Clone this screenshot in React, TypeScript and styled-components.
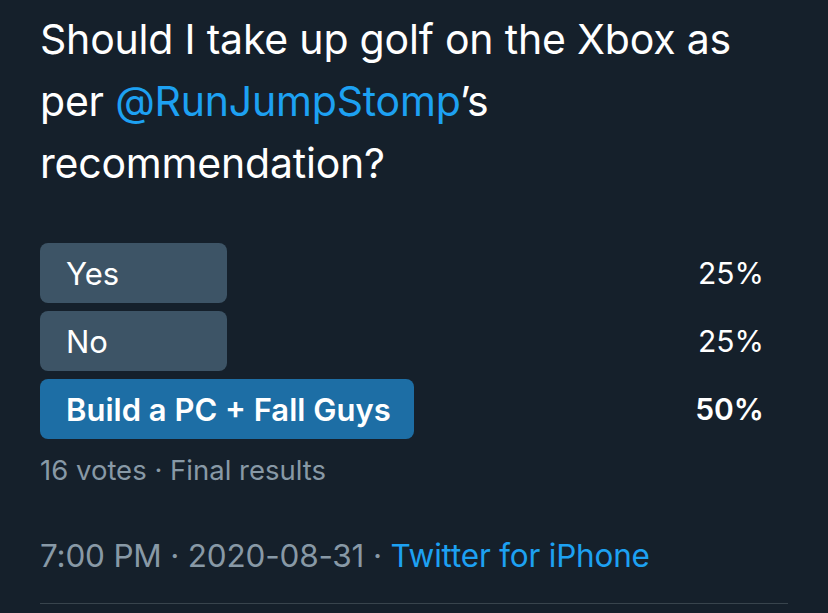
import React from "react";
import styled, { createGlobalStyle } from "styled-components";

const Global = createGlobalStyle`
  html, body {
    margin: 0;
    padding: 0;
    background: #15202b;
  }
  * { box-sizing: border-box; }
`;

const Page = styled.div`
  width: 828px;
  height: 613px;
  overflow: hidden;
  background: #15202b;
  padding: 8px 40px 0 40px;
  font-family: Inter, "Noto Sans", sans-serif;
  color: #ffffff;
  display: flex;
  flex-direction: column;
`;

const Question = styled.p`
  margin: 0;
  font-size: 41px;
  line-height: 62px;
  font-weight: 400;
  letter-spacing: -0.2px;
  color: #ffffff;
`;

const Mention = styled.span`
  color: #1da1f2;
`;

const Poll = styled.div`
  margin-top: 49px;
  display: flex;
  flex-direction: column;
  gap: 8px;
`;

const Row = styled.div`
  display: flex;
  align-items: center;
  height: 60px;
`;

const Bar = styled.div<{ $winner?: boolean }>`
  height: 60px;
  border-radius: 8px;
  background: ${(p) => (p.$winner ? "#1d6ea5" : "#3d5466")};
  display: flex;
  align-items: center;
  padding-left: 26px;
  white-space: nowrap;
  flex: none;
`;

const Label = styled.span<{ $winner?: boolean }>`
  font-size: 31px;
  font-weight: ${(p) => (p.$winner ? 600 : 400)};
  color: #ffffff;
`;

const Percent = styled.span<{ $winner?: boolean }>`
  margin-left: auto;
  padding-right: 24px;
  font-size: 30px;
  font-weight: ${(p) => (p.$winner ? 600 : 400)};
  color: #ffffff;
`;

const Stats = styled.div`
  margin-top: 15px;
  font-size: 27.5px;
  line-height: 32px;
  color: #8899a6;
`;

const Footer = styled.div`
  margin-top: 50px;
  font-size: 31.5px;
  line-height: 40px;
  color: #8899a6;
  letter-spacing: -0.2px;
`;

const Source = styled.span`
  color: #1da1f2;
`;

const Divider = styled.hr`
  margin: 27px 0 0 0;
  border: none;
  height: 1px;
  background: #38444d;
`;

const options = [
  { label: "Yes", pct: 25 },
  { label: "No", pct: 25 },
  { label: "Build a PC + Fall Guys", pct: 50, winner: true },
];

export default function App() {
  return (
    <>
      <Global />
      <Page>
        <Question>
          Should I take up golf on the Xbox as
          <br />
          per <Mention>@RunJumpStomp</Mention>’s
          <br />
          recommendation?
        </Question>
        <Poll>
          {options.map((o) => (
            <Row key={o.label}>
              <Bar $winner={o.winner} style={{ width: `${o.pct}%` }}>
                <Label $winner={o.winner}>{o.label}</Label>
              </Bar>
              <Percent $winner={o.winner}>{o.pct}%</Percent>
            </Row>
          ))}
        </Poll>
        <Stats>16 votes · Final results</Stats>
        <Footer>
          7:00 PM · 2020-08-31 · <Source>Twitter for iPhone</Source>
        </Footer>
        <Divider />
      </Page>
    </>
  );
}
